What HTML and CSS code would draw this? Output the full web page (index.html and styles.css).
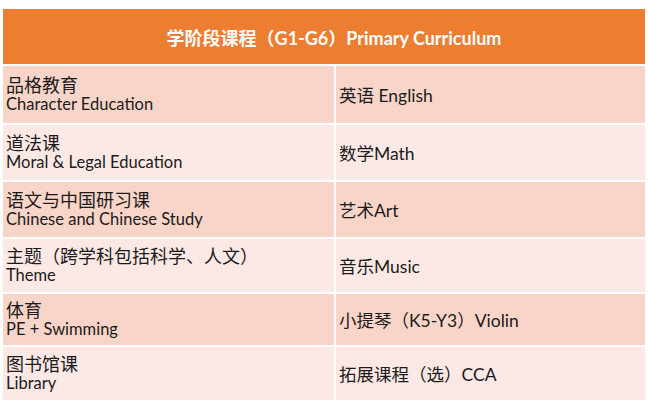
FILE: index.html
```html
<!DOCTYPE html>
<html lang="zh">
<head>
<meta charset="utf-8">
<link rel="stylesheet" href="styles.css">
</head>
<body>
<div class="table">
  <div class="head">学阶段课程（G1-G6）Primary Curriculum</div>
  <div class="row dark">
    <div class="cell left"><span class="zh">品格教育</span><span class="en">Character Education</span></div>
    <div class="cell right">英语 English</div>
  </div>
  <div class="row light">
    <div class="cell left"><span class="zh">道法课</span><span class="en">Moral &amp; Legal Education</span></div>
    <div class="cell right">数学Math</div>
  </div>
  <div class="row dark">
    <div class="cell left"><span class="zh">语文与中国研习课</span><span class="en">Chinese and Chinese Study</span></div>
    <div class="cell right">艺术Art</div>
  </div>
  <div class="row light">
    <div class="cell left"><span class="zh">主题（跨学科包括科学、人文）</span><span class="en">Theme</span></div>
    <div class="cell right">音乐Music</div>
  </div>
  <div class="row dark">
    <div class="cell left"><span class="zh">体育</span><span class="en">PE + Swimming</span></div>
    <div class="cell right">小提琴（K5-Y3）Violin</div>
  </div>
  <div class="row light">
    <div class="cell left"><span class="zh">图书馆课</span><span class="en">Library</span></div>
    <div class="cell right">拓展课程（选）CCA</div>
  </div>
</div>
</body>
</html>
```

FILE: styles.css
```css
html, body {
  margin: 0;
  padding: 0;
  background: #ffffff;
}
body {
  width: 648px;
  height: 406px;
  overflow: hidden;
  font-family: Lato, "Noto Sans CJK SC", sans-serif;
  color: #1b1b1b;
}
.table {
  margin: 9px 0 0 3px;
  width: 642px;
  display: flex;
  flex-direction: column;
  gap: 2px;
}
.head {
  height: 55px;
  background: #ed7d31;
  color: #ffffff;
  font-weight: 700;
  font-size: 18px;
  display: flex;
  align-items: center;
  justify-content: center;
  padding-left: 20px;
  box-sizing: border-box;
}
.row {
  display: grid;
  grid-template-columns: 331px 1fr;
  column-gap: 2px;
}
.row:nth-child(2) { height: 57px; }
.row:nth-child(3) { height: 55px; }
.row:nth-child(4) { height: 55px; }
.row:nth-child(5) { height: 53px; }
.row:nth-child(6) { height: 51px; }
.row:nth-child(7) { height: 53px; }
.dark .cell { background: #f8d5c8; }
.light .cell { background: #fce9e5; }
.cell {
  display: flex;
  flex-direction: column;
  justify-content: center;
}
.left {
  padding-left: 3px;
}
.right {
  padding-left: 3px;
  font-size: 17.5px;
}
.zh {
  font-size: 18px;
  line-height: 20px;
}
.en {
  font-size: 16.5px;
  line-height: 19px;
}
```
